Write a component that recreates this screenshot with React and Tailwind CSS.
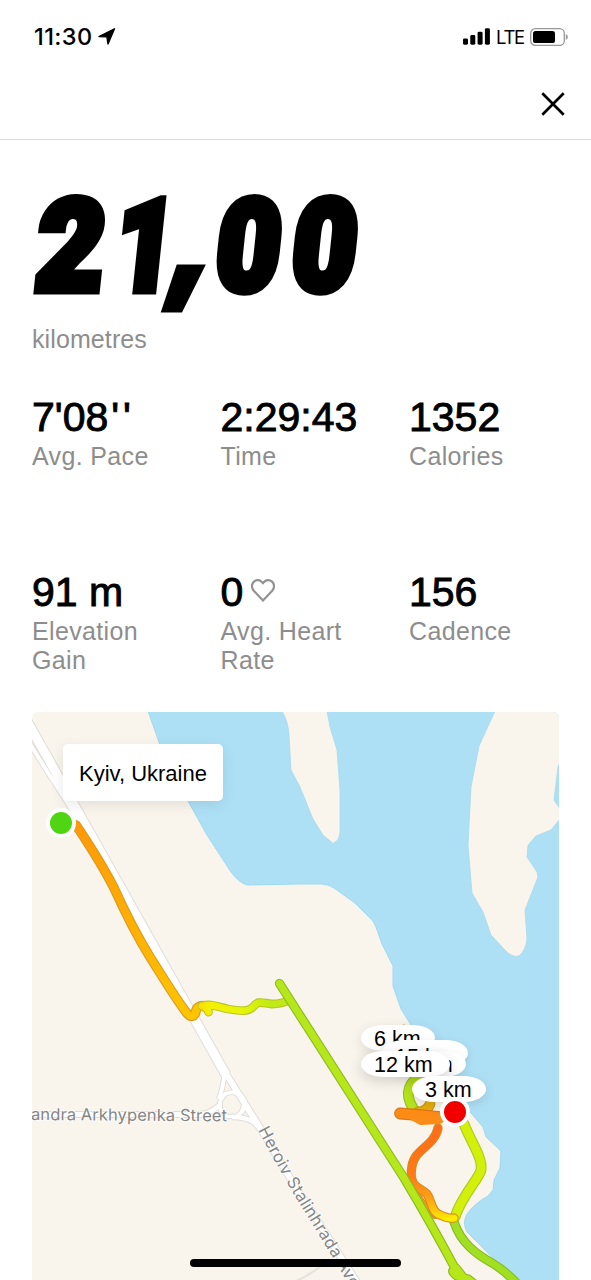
const stats = [
  { value: "7'08", suffix: "''", label: 'Avg. Pace' },
  { value: '2:29:43', label: 'Time' },
  { value: '1352', label: 'Calories' },
  { value: '91 m', label: 'Elevation Gain' },
  { value: '0', label: 'Avg. Heart Rate', heart: true },
  { value: '156', label: 'Cadence' },
]

function StatusBar() {
  return (
    <div className="h-[74px] pl-[34px] pr-[23px] flex items-start justify-between font-['Inter',sans-serif] text-black">
      <div className="flex items-center mt-[22px] h-[29px]">
        <span className="w-[60px] text-[23.5px] leading-[29px] font-medium tracking-[0.4px] whitespace-nowrap">11:30</span>
        <svg className="ml-[4px]" width="18" height="17" viewBox="0 0 18 17">
          <path d="M16.500.8 10 16 8.900 8.900 1 8.600Z" stroke="#000" strokeWidth="1.4" strokeLinejoin="round" />
        </svg>
      </div>
      <div className="flex items-center mt-[22px] h-[29px]">
        <svg width="28" height="17" viewBox="0 0 28 17">
          <rect x="0" y="10.4" width="5" height="6.3" rx="1.4" />
          <rect x="7.3" y="7" width="5" height="9.7" rx="1.4" />
          <rect x="14.6" y="3.7" width="5" height="13" rx="1.4" />
          <rect x="21.900" y="0.2" width="5" height="16.5" rx="1.4" />
        </svg>
        <span className="ml-[5px] mt-[1px] w-[29px] text-[18.5px] leading-[29px] tracking-[-1.3px]">LTE</span>
        <svg className="ml-[5px]" width="38" height="18" viewBox="0 0 38 18">
          <rect x="0.7" y="0.7" width="33.6" height="16.6" rx="4.6" fill="none" stroke="#999" strokeWidth="1.3" />
          <rect x="3" y="3" width="22" height="12" rx="2.6" />
          <path d="M35.8 6v6c1.6-.8 2-1.800 2-3s-.4-2.200-2-3Z" fill="#999" />
        </svg>
      </div>
    </div>
  )
}

function Stat({ value, suffix, label, heart }) {
  return (
    <div>
      <div className="flex items-center h-[46px] text-[41px] leading-[46px] text-black [-webkit-text-stroke:0.9px_#000]">
        {value}
        {suffix && <span className="ml-[3px] tracking-[4px]">{suffix}</span>}
        {heart && (
          <svg className="ml-[8px] -mt-[4px]" width="24" height="24" viewBox="0 0 24 24" fill="none" stroke="#929292" strokeWidth="2.2">
            <path d="M12 22.500 2.800 12.800C.3 10 .5 6 2.700 3.900 5.200 1.500 8.900 1.700 11 4.100L12 5.200 13 4.100C15.100 1.700 18.800 1.500 21.300 3.900 23.500 6 23.700 10 21.200 12.800Z" />
          </svg>
        )}
      </div>
      <div className="mt-[2px] w-[150px] text-[25px] leading-[29px] tracking-[0.35px] text-[#8d8d8d]">{label}</div>
    </div>
  )
}

function Pill({ className, children }) {
  return (
    <div className={`absolute h-[26px] pl-[13px] rounded-[22px/13px] bg-white text-[21.5px] whitespace-nowrap text-black ${className}`}>
      {children}
    </div>
  )
}

const roads = [
  { d: 'M27 721 226 1075', w: 9 },
  { d: 'M225.500 1073 L264 1134 Q286 1173 310 1209 L380 1318', w: 6 },
  { d: 'M28 741 L50 776 C68 802 82 826 100 858 S160 968 196 1016', w: 4 },
  { d: 'M28 1114.500 H199 Q210 1114 220 1105', w: 5 },
  { d: 'M232 1117 Q246 1117 253 1122 Q260 1127 265 1137', w: 4.5 },
  { d: 'M224.500 1074 Q223 1088 219 1099', w: 4 },
  { d: 'M245 1100 Q244 1108 241 1113', w: 4 },
  { d: 'M225 1094 L232 1092 241 1095 244.500 1100 243.500 1110 237 1116.500 227 1116.500 220.500 1110 220 1101 Z', w: 3.6 },
]

const routes = [
  { d: 'M76 825 C90 846 104 868 114 888 C124 910 137 936 150 957 C164 979 174 996 186 1012 Q192 1020 195.500 1013 C196 1007 200 1005 205 1006', w: 8, c: 'url(#start)', e: '#d79a22' },
  { d: 'M202 1006 L207 1009 208.500 1012 M203 1006 C210 1003 218 1007 228 1009 C240 1011 248 1012 253 1007 C258 1000 262 1003 272 1004 Q282 1004 289 1000', w: 7, c: 'url(#link)', e: '#b9c526' },
  { d: 'M404 1028 Q412 1032 420 1040', w: 5, c: '#f5a01e', e: '#d78a22' },
  { d: 'M421 1074 C405 1086 404 1098 418 1115', w: 9, c: '#b5e51b', e: '#93bd25' },
  { d: 'M464 1124 C471 1142 483 1158 481 1170 C479 1179 462 1195 455 1217', w: 9, c: '#d3f00b', e: '#adc91e' },
  { d: 'M454 1222 C461 1243 476 1254 492 1263 Q506 1271 521 1288', w: 7.500, c: '#a1e020', e: '#86b92a' },
  { d: 'M411 1176 C414 1190 422 1204 435 1216', w: 4, c: '#ff9a12', e: '#c98a22' },
  { d: 'M438 1128 C434 1147 415 1148 412 1166 C408 1188 420 1187 427 1194 C432 1201 431 1212 440 1215 Q449 1219 454 1218', w: 7.500, c: 'url(#loop)', e: '#d88a20' },
  { d: 'M279.500 983.500 L404 1178 Q432 1225 456 1270 Q449 1270 457 1276 L468 1279 482 1290 M456 1268 L466 1281', w: 7.500, c: '#b5e719', e: '#8db928' },
  { d: 'M418 1112 Q427 1112 430 1104', w: 9, c: '#e8ad0c', e: '#cb941b' },
  { d: 'M400 1113.500 L419 1115 440 1117', w: 10, c: '#ff8a14', e: '#dc7618' },
  { d: 'M414 1116 L421 1120 439 1119', w: 8, c: '#fb8c17', e: '#fb8c17' },
]

function MapDrawing() {
  // viewBox is in screen coordinates
  return (
    <svg className="block" width="527" height="568" viewBox="32 712 527 568">
      <defs>
        <linearGradient id="start" gradientUnits="userSpaceOnUse" x1="76" y1="825" x2="200" y2="1015">
          <stop offset="0" stopColor="#ff9807" />
          <stop offset="1" stopColor="#ffc600" />
        </linearGradient>
        <linearGradient id="link" gradientUnits="userSpaceOnUse" x1="196" y1="0" x2="288" y2="0">
          <stop offset="0" stopColor="#ffd800" />
          <stop offset="0.16" stopColor="#f4f000" />
          <stop offset="0.5" stopColor="#e6f508" />
          <stop offset="0.8" stopColor="#c0ea16" />
        </linearGradient>
        <linearGradient id="loop" gradientUnits="userSpaceOnUse" x1="430" y1="1125" x2="450" y2="1220">
          <stop offset="0" stopColor="#ff6a18" />
          <stop offset="0.5" stopColor="#ff7c16" />
          <stop offset="0.75" stopColor="#ffa511" />
          <stop offset="1" stopColor="#fff000" />
        </linearGradient>
        <path id="avenue" d="M258 1130 Q282 1176 304 1211 Q328 1249 362 1307" />
      </defs>
      <rect x="32" y="712" width="527" height="568" fill="#f9f5ed" />
      <g fill="#aee0f5" stroke="#9fd9ef" strokeWidth="1">
        <path d="M148 711 L160 745 188 801 207 835 231 872 Q240 884 248 885 L300 884 H322 Q328 884 334 888 L355 903 368 916 Q374 921 376 927 L382 944 393 966 V986 L401 1009 411 1025 440 1055 470 1112 483 1127 486 1137 501 1151 500 1168 494 1180 493 1190 488 1196 Q475 1203 467 1214 Q462 1223 467 1232 L480 1245 516 1282 H562 V711Z" />
      </g>
      <g fill="#f9f5ed" stroke="#a6dbed" strokeWidth="0.8">
        <path d="M282 711 Q288 721 289 735 L291 770 300 787 313 819 323 835 333 843.500 338 840 340 833 V790 L337 750 330 727 327 711Z" />
        <path d="M495 711 L479 746 471 787 468 845 472 893 483 912 491 935 505 950 Q512 958 519 956 Q526 950 527 939 L525 910 538 877 537 872 527 857 528 845 536 836 551 830 560 819 V809 L554 800 558 767 560 762 V711Z" />
      </g>
      <g fill="none" strokeLinejoin="round">
        {roads.map(({ d, w }) => (
          <path key={d} d={d} stroke="#dedbd6" strokeWidth={w + 1.8} />
        ))}
        <path d="M296 1281 Q308 1276 321 1266" stroke="#e6e1da" strokeWidth="2" />
        {roads.map(({ d, w }) => (
          <path key={d} d={d} stroke="#fff" strokeWidth={w} />
        ))}
      </g>
      <g fill="#858585" stroke="#fff" strokeOpacity="0.7" strokeWidth="2" paintOrder="stroke" className="font-['Inter',sans-serif] text-[16.500px]">
        <text x="31" y="1120" textLength="196" transform="rotate(0.4 31 1120)">andra Arkhypenka Street</text>
        <text letterSpacing="0.35"><textPath href="#avenue">Heroiv Stalinhrada Avenue</textPath></text>
      </g>
      <g fill="none" strokeLinecap="round" strokeLinejoin="round">
        {routes.map(({ d, w, c, e }) => (
          <g key={d}>
            <path d={d} stroke={e} strokeWidth={w + 1.8} />
            <path d={d} stroke={c} strokeWidth={w - 0.4} />
          </g>
        ))}
      </g>
    </svg>
  )
}

function RouteMap() {
  return (
    <div className="relative w-[527px] h-[568px] rounded-t-[6px] overflow-hidden">
      <MapDrawing />
      <div className="absolute left-[31px] top-[32px] w-[160px] h-[57px] rounded-[5px] bg-white shadow-[0_4px_14px_rgba(0,0,0,0.09)] pl-4 text-[22px] leading-[59px] text-black whitespace-nowrap">
        Kyiv, Ukraine
      </div>
      <div className="absolute left-[14px] top-[96px] w-[30px] h-[30px] rounded-full bg-[#50d512] border-4 border-white" />
      <Pill className="left-[329px] top-[313px] w-[74px] leading-[28px] shadow-[0_4px_14px_rgba(0,0,0,0.12)]">6 km</Pill>
      <Pill className="left-[350px] top-[328px] w-[86px] leading-[35px] shadow-[0_3px_10px_rgba(0,0,0,0.12)]">15 km</Pill>
      <Pill className="left-[361px] top-[339px] w-[73px] leading-[28px] shadow-[0_3px_10px_rgba(0,0,0,0.08)]">9 km</Pill>
      <Pill className="left-[329px] top-[339px] w-[89px] leading-[28px] shadow-[0_4px_14px_rgba(0,0,0,0.16)]">12 km</Pill>
      <Pill className="left-[380px] top-[364px] w-[74px] leading-[28px] shadow-[0_3px_12px_rgba(0,0,0,0.12)]">3 km</Pill>
      <div className="absolute left-[408px] top-[385px] w-[30px] h-[30px] rounded-full bg-[#f20000] border-4 border-white" />
    </div>
  )
}

export default function App() {
  return (
    <div className="relative w-[591px] h-[1280px] overflow-hidden bg-white font-['Liberation_Sans',sans-serif]">
      <StatusBar />
      <header className="h-[66px] border-b border-[#dcdcdc] flex justify-end pr-[26px] pt-[18px]">
        <svg width="24" height="24" viewBox="0 0 24 24" stroke="#000" strokeWidth="2.7">
          <path d="M1.300 1.300 22.700 22.700M22.700 1.300 1.300 22.700" />
        </svg>
      </header>

      <main className="px-8">
        <h1 className="mt-[32px] ml-[2px] h-[152px] w-[340px] flex font-['Roboto',sans-serif] font-black text-[127px] leading-[149px] text-black whitespace-nowrap -skew-x-[6deg] [-webkit-text-stroke:9px_#000]">
          <span className="w-[76px] origin-center scale-x-[0.92]">2</span>
          <span className="w-[58px] origin-center scale-x-[0.8]">1</span>
          <span className="w-[44px] origin-left font-['Inter',sans-serif] text-[120px] translate-x-[6px] -translate-y-[7px] scale-x-[0.9] -skew-x-[7deg]">,</span>
          <span className="w-[76px] origin-center scale-x-[0.87]">0</span>
          <span className="w-[76px] origin-center scale-x-[0.87]">0</span>
        </h1>
        <p className="mt-px text-[25px] leading-[29px] tracking-[0.1px] text-[#8d8d8d]">kilometres</p>

        <section className="mt-[40px] grid grid-cols-[188.5px_188.5px_150px] grid-rows-[175px_143px]">
          {stats.map((s) => (
            <Stat key={s.label} {...s} />
          ))}
        </section>

        <RouteMap />
      </main>

      <div className="absolute left-[190px] top-[1259px] w-[211px] h-[8px] rounded-full bg-black" />
    </div>
  )
}
